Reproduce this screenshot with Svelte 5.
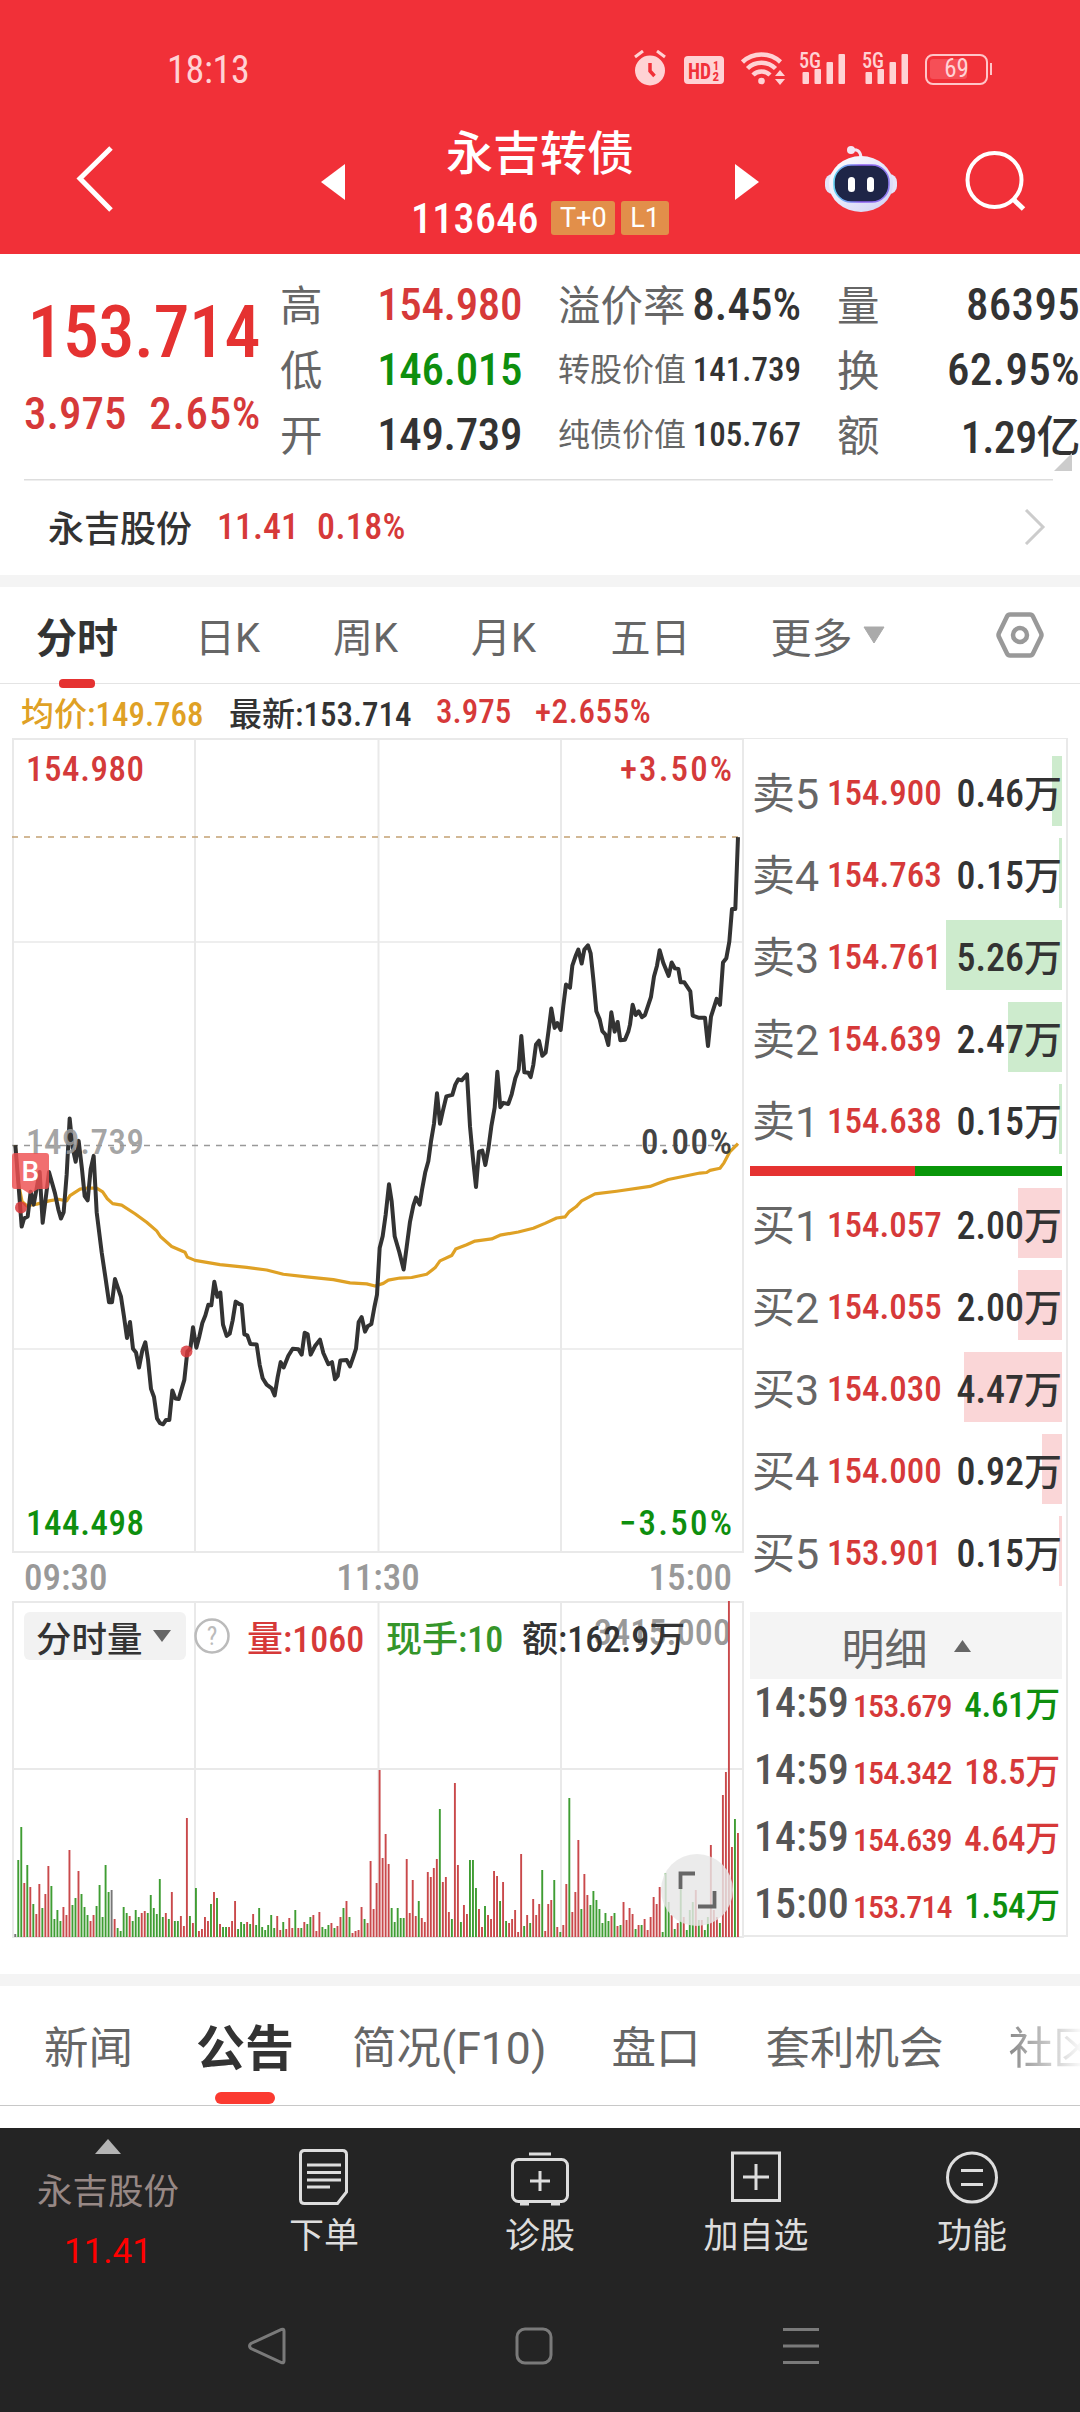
<script>
    // order book: [label, price, volume, bar width]
    const sells = [
        ["卖5", "154.900", "0.46万", 10],
        ["卖4", "154.763", "0.15万", 3],
        ["卖3", "154.761", "5.26万", 116],
        ["卖2", "154.639", "2.47万", 54],
        ["卖1", "154.638", "0.15万", 3],
    ];
    const buys = [
        ["买1", "154.057", "2.00万", 44],
        ["买2", "154.055", "2.00万", 44],
        ["买3", "154.030", "4.47万", 98],
        ["买4", "154.000", "0.92万", 20],
        ["买5", "153.901", "0.15万", 3],
    ];
    const deals = [
        ["14:59", "153.679", "4.61万", "green"],
        ["14:59", "154.342", "18.5万", "red"],
        ["14:59", "154.639", "4.64万", "red"],
        ["15:00", "153.714", "1.54万", "green"],
    ];

    const priceLine =
        "46,775 55,845 65,927 72,912 83,908 92,862 101,886 119,825 128,920 147,825 165,865 175,895 183,912 191,900 200,830 209,725 218,780 227,806 236,767 246,820 254,870 263,878 272,820 281,795 290,900 305,975 317,1025 327,1068 336,1068 345,1025 354,1042 363,1058 372,1095 381,1135 390,1105 399,1155 408,1162 417,1190 427,1158 436,1143 444,1175 453,1230 462,1245 471,1285 480,1294 489,1296 498,1288 508,1288 517,1233 526,1248 536,1249 545,1230 553,1213 562,1160 571,1155 579,1115 589,1153 598,1132 607,1107 616,1093 625,1073 634,1074 643,1030 652,1058 661,1050 669,1110 680,1131 689,1127 698,1102 707,1067 716,1071 725,1073 733,1128 742,1130 751,1146 770,1147 779,1185 788,1210 800,1222 815,1229 824,1242 833,1208 842,1180 851,1190 865,1168 878,1155 895,1156 905,1166 914,1125 923,1128 932,1166 945,1150 960,1138 970,1163 985,1184 996,1180 1005,1212 1013,1206 1021,1177 1040,1176 1050,1188 1060,1170 1068,1155 1076,1105 1085,1096 1095,1123 1103,1113 1114,1109 1123,1078 1131,1054 1139,967 1148,945 1157,905 1167,848 1175,880 1184,945 1198,975 1211,1007 1220,965 1230,918 1240,888 1248,873 1259,886 1267,855 1276,825 1285,805 1293,768 1302,735 1311,678 1320,735 1329,710 1339,684 1357,681 1366,662 1375,652 1385,654 1401,643 1410,740 1419,800 1428,853 1437,787 1447,785 1456,812 1465,782 1474,740 1484,705 1492,638 1501,704 1510,696 1525,698 1535,680 1546,650 1556,634 1564,571 1573,639 1585,640 1592,648 1600,625 1608,587 1617,580 1627,608 1637,602 1646,560 1654,520 1664,556 1672,547 1682,560 1690,515 1698,475 1710,481 1717,440 1728,420 1735,410 1745,436 1753,410 1764,402 1772,417 1780,465 1789,525 1799,540 1807,562 1816,568 1825,588 1834,527 1844,563 1853,545 1861,579 1875,578 1885,563 1890,550 1898,513 1907,532 1916,525 1926,536 1935,532 1944,515 1953,498 1962,460 1971,440 1979,411 1990,435 2006,459 2015,434 2025,445 2035,446 2042,471 2053,471 2071,488 2078,533 2095,537 2115,537 2124,590 2133,535 2150,502 2160,513 2169,434 2179,426 2188,395 2196,334 2206,334 2214,200";
    const avgLine =
        "46,775 55,845 66,880 80,888 110,885 147,879 175,876 200,879 210,869 240,857 262,855 290,855 308,862 322,875 338,884 365,887 405,903 440,919 470,935 482,946 515,964 555,975 562,984 585,990 660,998 740,1003 800,1008 850,1016 920,1021 1000,1026 1050,1032 1100,1034 1125,1038 1150,1033 1165,1027 1200,1023 1235,1022 1280,1016 1305,1004 1320,991 1355,981 1367,969 1400,961 1425,954 1475,950 1500,943 1555,937 1600,930 1635,921 1670,911 1695,909 1708,899 1728,890 1745,879 1785,866 1850,861 1950,852 2005,839 2100,827 2120,826 2130,822 2160,818 2172,808 2190,787 2214,772";

    // one entry per minute: r = up, g = down, k = flat
    const volumes =
        "k3 g77 g110 r54 g72 r50 g33 r23 r53 g29 r43 r71 g51 g18 g27 g16 r30 r22 r87 g32 g39 r66 g43 g30 g22 r16 r22 g31 g52 g20 g72 g45 k47 r18 g9 g6 g30 g24 r21 g16 g27 g20 r24 r26 g24 g42 g29 g23 g58 g20 r24 g18 r45 g16 g16 r21 r11 r119 g21 r14 g49 r6 r8 r20 r16 g33 r45 g39 r13 g10 g10 r10 r16 r36 g8 g15 g13 r15 g13 r23 g12 g29 g10 g7 g12 g22 g9 r21 r7 g15 r8 r19 r9 g27 r9 g9 r15 g13 g20 r22 r6 r25 g10 g8 g12 r14 g9 r11 r20 g29 r36 g20 r4 r6 r7 r30 g18 r14 r76 r28 r54 r167 r79 r103 r73 g29 g15 g29 g19 g19 r78 r24 r57 r21 g36 r19 r15 r65 r60 r69 r78 g128 r55 r60 r25 g18 r154 r72 g15 r32 r23 g77 g77 g49 r28 r10 g31 r22 r18 r66 r61 g36 r55 g16 r14 r18 r27 r5 r83 g11 r22 g14 r38 r22 r33 g67 r6 r33 r37 g57 r10 g5 r12 r53 g139 r25 r45 r97 g28 r63 r42 g32 g46 g37 g28 g14 g24 g16 r21 g24 r11 g12 r35 r17 r29 r23 g8 r12 g12 r18 r7 r20 r40 r33 r50 g5 g64 g35 r22 g8 r14 g50 r20 g7 g27 g35 r47 g17 r17 g7 g20 r92 r27 r20 g14 r142 r165 r336 r90 g118 r104".split(" ");
    const barColors = { r: "#c9494b", g: "#3f9d33", k: "#777" };
    const bars = volumes.map((v, i) => ({
        x: 2.3 + i * (722.7 / (volumes.length - 1)),
        h: Number(v.slice(1)),
        color: barColors[v[0]],
    }));
</script>

{#snippet signal()}
    <svg class="signal" width="47" height="34" viewBox="0 0 47 34">
        <text x="0" y="15.500" textLength="22" lengthAdjust="spacingAndGlyphs">5G</text>
        <rect x="3.500" y="20" width="6.500" height="12" rx="1" />
        <rect x="15.500" y="17" width="6.500" height="15" rx="1" />
        <rect x="27.500" y="10" width="6.500" height="22" rx="1" />
        <rect x="39.500" y="2" width="6.500" height="30" rx="1" />
    </svg>
{/snippet}

{#snippet level(row, kind)}
    <div class="level">
        <div class="depth {kind}" style="width: {row[3]}px"></div>
        <span class="lv">{row[0]}</span>
        <span class="lp">{row[1]}</span>
        <span class="lq">{row[2]}</span>
    </div>
{/snippet}

<div class="page">
    <header>
        <div class="status">
            <span class="clock">18:13</span>
            <div class="sysicons">
                <svg class="alarm" width="32" height="36" viewBox="0 0 32 36">
                    <circle cx="16" cy="20.500" r="15" fill="#ffd2d4" />
                    <path d="M1 7l8-6M31 7l-8-6" stroke="#ffd2d4" stroke-width="3" />
                    <path d="M16 13v8l4.500 5" fill="none" stroke="#f13038" stroke-width="3.500" />
                </svg>
                <svg class="hd" width="40" height="29" viewBox="0 0 40 29">
                    <rect width="40" height="28" rx="4" fill="#ffd2d4" />
                    <text x="4" y="22.500" font-size="22" textLength="23" lengthAdjust="spacingAndGlyphs">HD</text>
                    <text x="29" y="13.500" font-size="12">1</text>
                    <text x="28.500" y="25" font-size="13">2</text>
                </svg>
                <svg class="wifi" width="45" height="36" viewBox="0 0 45 36">
                    <path d="M1.500 12a28 28 0 0 1 38 0M6.500 18.500a20 20 0 0 1 28 0M12 25a12 12 0 0 1 17 0" fill="none" stroke="#ffd2d4" stroke-width="4.500" />
                    <circle cx="20.500" cy="31" r="3.300" fill="#ffd2d4" />
                    <path d="M34 26l5-6 5 6zM34 29l5 6 5-6z" fill="#ffd2d4" />
                </svg>
                {@render signal()}
                {@render signal()}
                <div class="battery"><span>69</span></div>
            </div>
        </div>
        <div class="titlebar">
            <svg class="back" width="40" height="68" viewBox="0 0 40 68">
                <path d="M36 3L5 33.500 36 65" fill="none" stroke="#fff" stroke-width="5" />
            </svg>
            <svg class="prev" width="24" height="36" viewBox="0 0 24 36"><path d="M24 0v36L0 18z" fill="#fff" /></svg>
            <div class="names">
                <div class="name">永吉转债</div>
                <div class="code">
                    <span class="num">113646</span>
                    <i class="t0">T+0</i>
                    <i class="l1">L1</i>
                </div>
            </div>
            <svg class="next" width="24" height="36" viewBox="0 0 24 36"><path d="M0 0v36L24 18z" fill="#fff" /></svg>
            <svg class="robot" width="74" height="68" viewBox="0 0 74 68">
                <defs>
                    <linearGradient id="shell" x1="0" y1="0" x2="1" y2="1">
                        <stop offset="0" stop-color="#fff" />
                        <stop offset="1" stop-color="#cfd0f4" />
                    </linearGradient>
                    <linearGradient id="rim" x1="0" y1="0" x2="1" y2="0">
                        <stop offset="0" stop-color="#63d2f2" />
                        <stop offset=".5" stop-color="#8b5cf0" />
                        <stop offset="1" stop-color="#8e7cf0" />
                    </linearGradient>
                </defs>
                <path d="M27 5q9-2 10 7" fill="none" stroke="#f3e6f4" stroke-width="3" />
                <circle cx="27" cy="5" r="4" fill="#f3e6f4" />
                <rect x="1" y="29" width="72" height="20" rx="8" fill="#e6e3f8" />
                <ellipse cx="37" cy="39" rx="32" ry="28" fill="url(#shell)" />
                <rect x="10" y="20" width="55" height="37" rx="17" fill="#1e2547" stroke="url(#rim)" stroke-width="1.600" />
                <rect x="24" y="32" width="7" height="15" rx="3.500" fill="#fff" />
                <rect x="43" y="32" width="7" height="15" rx="3.500" fill="#fff" />
            </svg>
            <svg class="search" width="62" height="62" viewBox="0 0 62 62">
                <circle cx="29.500" cy="30" r="27" fill="none" stroke="#fff" stroke-width="4" />
                <path d="M48 49l10.500 10" stroke="#fff" stroke-width="5" />
            </svg>
        </div>
    </header>

    <section class="quote">
        <div class="last">
            <div class="price">153.714</div>
            <div class="change"><span>3.975</span><span>2.65%</span></div>
        </div>
        <div class="cell"><span class="k">高</span><b class="red">154.980</b></div>
        <div class="cell mid"><span class="k">溢价率</span><b>8.45%</b></div>
        <div class="cell end"><span class="k">量</span><b>86395</b></div>
        <div class="cell"><span class="k">低</span><b class="green">146.015</b></div>
        <div class="cell mid small"><span class="k">转股价值</span><b>141.739</b></div>
        <div class="cell end"><span class="k">换</span><b>62.95%</b></div>
        <div class="cell"><span class="k">开</span><b>149.739</b></div>
        <div class="cell mid small"><span class="k">纯债价值</span><b>105.767</b></div>
        <div class="cell end"><span class="k">额</span><b class="yi">1.29亿</b></div>
        <svg class="corner" width="18" height="18" viewBox="0 0 18 18"><path d="M18 0v18H0z" fill="#ccc" /></svg>
    </section>

    <section class="stock">
        <span class="sname">永吉股份</span>
        <span class="red s1">11.41</span>
        <span class="red s2">0.18%</span>
        <svg width="24" height="36" viewBox="0 0 24 36"><path d="M3 1l17 17L3 35" fill="none" stroke="#ccc" stroke-width="3" /></svg>
    </section>

    <nav class="periods">
        <span class="on">分时</span>
        <span>日K</span>
        <span>周K</span>
        <span>月K</span>
        <span>五日</span>
        <span>更多</span>
        <svg class="more" width="22" height="18" viewBox="0 0 22 18"><path d="M1 1h20L11 17z" fill="#aaa" stroke="#aaa" stroke-linejoin="round" /></svg>
        <svg class="gear" width="48" height="46" viewBox="0 0 48 46">
            <path d="M14 2.500h20q2 0 3 2l8 16.500q1 2 0 4l-8 16.500q-1 2-3 2H14q-2 0-3-2L3 25q-1-2 0-4l8-16.500q1-2 3-2z" fill="none" stroke="#999" stroke-width="4.500" />
            <circle cx="24" cy="23" r="7" fill="none" stroke="#999" stroke-width="4.500" />
        </svg>
    </nav>

    <div class="legend">
        <span class="avg">均价:149.768</span>
        <span class="new">最新:153.714</span>
        <span class="red chg">3.975</span>
        <span class="red pct">+2.655%</span>
    </div>

    <div class="board">
        <div class="charts">
            <svg class="pricechart" width="732" height="818" viewBox="0 0 732 818">
                <g fill="none" stroke="#e9e9e9" stroke-width="2">
                    <path d="M1 4h730v813H1zM183 4v813M366.500 4v813M549 4v813" />
                    <path d="M1 207h730M1 614h730" stroke-width="1.500" />
                </g>
                <path d="M0 102h726" stroke="#c3a173" stroke-width="1.700" stroke-dasharray="6 6" />
                <path d="M0 410.500h726" stroke="#999" stroke-width="1.700" stroke-dasharray="6 6" />
                <g class="axis">
                    <text x="14" y="45.500" fill="#d43a3a" textLength="118">154.980</text>
                    <text x="608" y="45.500" fill="#d43a3a" textLength="112">+3.50%</text>
                    <text x="14" y="800" fill="#0e8f0e" textLength="118">144.498</text>
                    <text x="607" y="800" fill="#0e8f0e" textLength="113">−3.50%</text>
                </g>
                <g transform="translate(-12 -5) scale(.33333 .53571)" fill="none" stroke-linejoin="round">
                    <polyline points={avgLine} stroke="#dfa125" stroke-width="3.200" vector-effect="non-scaling-stroke" />
                    <polyline points={priceLine} stroke="#333" stroke-width="4" vector-effect="non-scaling-stroke" />
                </g>
                <g class="axis">
                    <text x="14" y="419" fill="#999" fill-opacity=".9" textLength="118">149.739</text>
                    <text x="629" y="419" fill="#444" textLength="91">0.00%</text>
                </g>
                <circle cx="9" cy="472.500" r="6" fill="#d8383c" fill-opacity=".85" />
                <circle cx="174.500" cy="616.500" r="6" fill="#d8383c" fill-opacity=".85" />
                <path d="M3 418h31q3 0 3 3v30q0 3-3 3H26l-8 5-8-5H3q-3 0-3-3v-30q0-3 3-3z" fill="#ee4f50" fill-opacity=".82" />
                <text class="mark" x="9.500" y="446">B</text>
            </svg>
            <div class="times"><span>09:30</span><span>11:30</span><span>15:00</span></div>
            <div class="volume">
                <svg width="732" height="337" viewBox="0 0 732 337">
                    <g fill="none" stroke="#e9e9e9" stroke-width="2">
                        <path d="M1 1h730v335H1zM183 1v335M366.500 1v335M549 1v335M1 168h730" />
                    </g>
                    <text class="volmax" x="582" y="43.500" textLength="137">3415.000</text>
                    {#each bars as b}
                        <rect x={b.x} y={336 - b.h} width="1.900" height={b.h} fill={b.color} />
                    {/each}
                </svg>
                <div class="volbar">
                    <span class="pick">分时量<svg width="18" height="12" viewBox="0 0 18 12"><path d="M0 0h18L9 12z" fill="#666" /></svg></span>
                    <svg width="36" height="36" viewBox="0 0 36 36">
                        <circle cx="18" cy="18" r="16.500" fill="none" stroke="#bbb" stroke-width="2.500" />
                        <text class="ask" x="18" y="26.500">?</text>
                    </svg>
                    <span class="red v1">量:1060</span>
                    <span class="v2">现手:10</span>
                    <span class="v3">额:162.9万</span>
                </div>
                <svg class="expand" width="72" height="72" viewBox="0 0 72 72">
                    <circle cx="36" cy="36" r="36" fill="#e6e6e6" fill-opacity=".82" />
                    <path d="M19.500 35V19.500H34M53.500 37v15.500H37" fill="none" stroke="#666" stroke-width="3.800" />
                </svg>
            </div>
        </div>

        <aside>
            {#each sells as row}
                {@render level(row, "sell")}
            {/each}
            <div class="ratio"></div>
            {#each buys as row}
                {@render level(row, "buy")}
            {/each}
            <div class="dealhead">
                明细
                <svg width="17" height="12" viewBox="0 0 17 12"><path d="M8.500 0L17 12H0z" fill="#666" /></svg>
            </div>
            {#each deals as [time, price, vol, color]}
                <div class="deal">
                    <span class="dt">{time}</span>
                    <span class="dp">{price}</span>
                    <span class="dv {color}">{vol}</span>
                </div>
            {/each}
        </aside>
    </div>

    <nav class="infotabs">
        <span>新闻</span>
        <span class="on">公告</span>
        <span>简况(F10)</span>
        <span>盘口</span>
        <span>套利机会</span>
        <span class="fade">社区</span>
    </nav>

    <footer>
        <div class="tools">
            <div class="tool mini">
                <svg width="26" height="15" viewBox="0 0 26 15"><path d="M13 0l13 15H0z" fill="#b4b4b4" /></svg>
                <span class="mname">永吉股份</span>
                <span class="mprice">11.41</span>
            </div>
            <div class="tool">
                <svg width="60" height="60" viewBox="0 0 60 60">
                    <path d="M10.500 3.500h38q4 0 4 4V45l-9 11.500h-33q-4 0-4-4v-45q0-4 4-4z" />
                    <path d="M13 18h34M13 25.500h34M13 33h34M13 40h23" />
                </svg>
                <span>下单</span>
            </div>
            <div class="tool">
                <svg width="60" height="60" viewBox="0 0 60 60">
                    <rect x="2.500" y="12.500" width="55" height="42" rx="6" />
                    <path d="M19 7h22M30 24v20M20 34h20" />
                    <path d="M10 56.500h9M41 56.500h9" stroke-width="4" />
                </svg>
                <span>诊股</span>
            </div>
            <div class="tool">
                <svg width="60" height="60" viewBox="0 0 60 60">
                    <rect x="6.500" y="6" width="47" height="47.500" />
                    <path d="M30 17v26M17 30h26" />
                </svg>
                <span>加自选</span>
            </div>
            <div class="tool">
                <svg width="60" height="60" viewBox="0 0 60 60">
                    <circle cx="30" cy="30.500" r="24.500" />
                    <path d="M19 23.500h22M19 37.500h22" />
                </svg>
                <span>功能</span>
            </div>
        </div>
        <div class="softkeys">
            <svg width="38" height="38" viewBox="0 0 38 38"><path d="M36 4v30q0 2.500-2.500 1.500L3 21.500q-3-2.500 0-5L33.500 2.500Q36 1.500 36 4z" /></svg>
            <svg width="38" height="38" viewBox="0 0 38 38"><rect x="2" y="2" width="34" height="34" rx="8" /></svg>
            <svg width="38" height="38" viewBox="0 0 38 38"><path d="M1 2.500h36M1 19h36M1 35.500h36" /></svg>
        </div>
    </footer>
</div>

<style>
    :global(body) {
        margin: 0;
        background: #fff;
    }
    .page {
        width: 1080px;
        height: 2412px;
        overflow: hidden;
        display: flex;
        flex-direction: column;
        font-family: Roboto, "Noto Sans CJK SC", sans-serif;
        font-stretch: 87%;
        font-weight: 500;
        color: #333;
        white-space: nowrap;
        background: #fff;
    }
    svg {
        display: block;
        flex: none;
    }
    .red {
        color: #d63939;
    }
    .green {
        color: #0e8f0e;
    }

    header {
        height: 254px;
        background: #f13038;
        color: #fff;
        flex: none;
    }
    .status {
        height: 120px;
        display: flex;
        justify-content: space-between;
        padding: 50px 88px 0 167px;
        box-sizing: border-box;
        color: #ffd2d4;
    }
    .clock {
        font-size: 38px;
        line-height: 40px;
        font-weight: 400;
        letter-spacing: -0.3px;
    }
    .sysicons {
        display: flex;
        align-items: flex-start;
    }
    .hd {
        margin: 6px 0 0 18px;
    }
    .hd text {
        fill: #f13038;
        font-weight: 700;
    }
    .wifi {
        margin-left: 17px;
    }
    .signal {
        margin: 2px 0 0 13px;
        fill: #ffd2d4;
        overflow: visible;
    }
    .signal + .signal {
        margin-left: 16px;
    }
    .signal text {
        font-size: 22px;
        font-weight: 500;
    }
    .battery {
        position: relative;
        width: 63px;
        height: 31px;
        margin: 4px 4px 0 16px;
        padding: 3px;
        box-sizing: border-box;
        border: 2.5px solid #ffc5c8;
        border-radius: 8px;
        font-size: 25px;
        line-height: 20px;
        font-weight: 400;
        text-align: center;
    }
    .battery::before {
        content: "";
        position: absolute;
        left: 3px;
        top: 3px;
        width: 37px;
        height: 20px;
        background: #f64f57;
        border-radius: 3px;
    }
    .battery::after {
        content: "";
        position: absolute;
        right: -6px;
        top: 7px;
        width: 2px;
        height: 12px;
        background: #ffc5c8;
    }
    .battery span {
        position: relative;
    }
    .titlebar {
        display: flex;
        align-items: flex-start;
    }
    .back {
        margin: 25px 0 0 75px;
    }
    .prev {
        margin: 44px 0 0 206px;
    }
    .names {
        width: 390px;
        display: flex;
        flex-direction: column;
        align-items: center;
    }
    .name {
        font-size: 47px;
        line-height: 60px;
        margin-top: 4px;
        font-weight: 500;
    }
    .code {
        display: flex;
        align-items: center;
        width: 258px;
        height: 36px;
        margin-top: 16px;
        font-size: 42px;
    }
    .code .num {
        width: 141px;
        letter-spacing: 0.3px;
    }
    .code i {
        font-style: normal;
        font-weight: 400;
        font-size: 27px;
        font-stretch: 100%;
        line-height: 34px;
        height: 34px;
        text-align: center;
        background: #e28f4a;
        border-radius: 3px;
    }
    .t0 {
        width: 64px;
        margin-right: 6px;
    }
    .l1 {
        width: 48px;
    }
    .next {
        margin-top: 44px;
    }
    .robot {
        margin: 25px 0 0 65px;
    }
    .search {
        margin: 30px 0 0 67px;
    }

    .quote {
        position: relative;
        display: grid;
        grid-template-columns: 280px 278px 279px 243px;
        grid-template-rows: repeat(3, 65px);
        padding-top: 18px;
        height: 225px;
        box-sizing: border-box;
        flex: none;
    }
    .last {
        grid-row: 1 / 4;
        width: 233px;
        padding: 23px 0 0 27px;
        text-align: right;
        color: #e53231;
    }
    .price {
        font-size: 72px;
        line-height: 76px;
        letter-spacing: -0.5px;
    }
    .change {
        display: flex;
        justify-content: space-between;
        margin-top: 18px;
        margin-left: -3px;
        margin-right: -1px;
        font-size: 45px;
        line-height: 50px;
        color: #d63939;
    }
    .change span + span {
        letter-spacing: 0.6px;
    }
    .cell {
        display: flex;
        align-items: center;
        justify-content: space-between;
        padding-right: 36px;
        height: 65px;
    }
    .mid {
        padding-right: 36px;
    }
    .end {
        padding-right: 0;
    }
    .k {
        font-size: 42.5px;
        font-weight: 400;
        color: #666;
        margin-top: -5px;
    }
    .cell b {
        font-size: 45px;
        font-weight: 500;
        letter-spacing: -0.4px;
    }
    .mid b {
        letter-spacing: 0;
    }
    .end b {
        letter-spacing: 0.3px;
    }
    .end .yi {
        font-size: 44px;
        letter-spacing: -0.6px;
        margin-top: -2px;
    }
    .small .k {
        font-size: 32px;
    }
    .small b {
        font-size: 33px;
    }
    .corner {
        position: absolute;
        right: 8px;
        bottom: 8px;
    }

    .stock {
        display: flex;
        align-items: center;
        height: 96px;
        padding: 0 33px 0 48px;
        border-bottom: 12px solid #f4f4f4;
        font-size: 36px;
        flex: none;
        background: linear-gradient(#ddd, #ddd) 24px 0 / 1029px 1.5px no-repeat;
    }
    .sname {
        width: 169px;
        font-size: 36px;
        margin-top: -3px;
    }
    .s1 {
        width: 100px;
    }
    .s2 {
        letter-spacing: 0.4px;
    }
    .stock svg {
        margin-left: auto;
    }

    .periods {
        height: 96px;
        display: flex;
        align-items: center;
        border-bottom: 1px solid #e4e4e4;
        font-size: 40px;
        font-weight: 400;
        font-stretch: 100%;
        color: #666;
        padding-left: 36px;
        flex: none;
    }
    .periods span {
        width: 139.5px;
        margin-top: -1px;
    }
    .periods .on {
        position: relative;
        width: 159px;
        font-size: 41px;
        font-weight: 700;
        color: #333;
    }
    .periods .on::after {
        content: "";
        position: absolute;
        left: 23px;
        bottom: -23px;
        width: 36px;
        height: 9px;
        border-radius: 4px;
        background: #e53231;
    }
    .periods span:nth-child(2),
    .periods span:nth-child(3) {
        width: 138px;
    }
    .periods span:nth-child(5) {
        width: 160px;
    }
    .periods span:nth-child(6) {
        width: 92px;
        font-size: 41px;
    }
    .gear {
        margin-left: 111px;
    }

    .legend {
        display: flex;
        align-items: center;
        height: 51px;
        padding: 4px 0 0 21px;
        box-sizing: border-box;
        font-size: 33px;
        flex: none;
    }
    .avg {
        width: 208px;
        color: #dfa125;
    }
    .new {
        width: 207px;
    }
    .chg {
        width: 99px;
    }
    .pct {
        letter-spacing: 0.6px;
    }

    .board {
        display: flex;
        height: 1203px;
        padding-left: 12px;
        flex: none;
    }
    .charts {
        width: 732px;
    }
    .axis text {
        font-size: 35px;
    }
    .mark {
        font-size: 28px;
        font-stretch: 100%;
        fill: #fff;
    }
    .times {
        display: flex;
        justify-content: space-between;
        align-items: center;
        height: 48px;
        padding: 0 12px;
        font-size: 37px;
        color: #999;
    }
    .volume {
        position: relative;
    }
    .volmax {
        font-size: 36px;
        fill: #999;
    }
    .volbar {
        position: absolute;
        left: 12px;
        top: 11px;
        display: flex;
        align-items: center;
        height: 48px;
        font-size: 36px;
    }
    .pick {
        display: flex;
        align-items: center;
        justify-content: space-between;
        width: 162px;
        height: 48px;
        margin-right: 8px;
        padding: 0 15px 0 12px;
        box-sizing: border-box;
        background: #f2f2f2;
        border-radius: 6px;
        font-size: 35.5px;
    }
    .ask {
        font-size: 25px;
        font-weight: 400;
        fill: #bbb;
        text-anchor: middle;
    }
    .v1 {
        width: 139px;
        margin-left: 17px;
    }
    .v2 {
        width: 136px;
        color: #35952a;
    }
    .expand {
        position: absolute;
        right: 11px;
        top: 253px;
    }

    aside {
        width: 324px;
        height: 1199px;
        box-sizing: border-box;
        padding: 17px 4px 0 6px;
        border-top: 1px solid #e9e9e9;
        border-right: 2px solid #e9e9e9;
        border-bottom: 2px solid #e9e9e9;
        margin-top: 3px;
    }
    .level {
        position: relative;
        display: flex;
        align-items: center;
        height: 70px;
        margin-bottom: 12px;
    }
    .depth {
        position: absolute;
        right: 0;
        top: 0;
        height: 70px;
    }
    .sell {
        background: #cdebcd;
    }
    .buy {
        background: #fad6d7;
    }
    .level span {
        position: relative;
    }
    .lv {
        width: 75px;
        padding-left: 2px;
        margin-top: -3px;
        font-size: 43px;
        font-weight: 400;
        font-stretch: 100%;
        color: #666;
    }
    .lp {
        font-size: 35px;
        color: #d63939;
        margin-top: 4px;
    }
    .lq {
        margin: -2px 0 0 auto;
        font-size: 38px;
    }
    .ratio {
        height: 10px;
        margin: 2px 0 12px;
        background: linear-gradient(90deg, #e53231 165px, #099609 165px);
    }
    .dealhead {
        display: flex;
        align-items: center;
        justify-content: center;
        gap: 26px;
        height: 67px;
        margin-top: 26px;
        background: #f4f4f4;
        font-size: 43px;
        font-weight: 400;
        color: #666;
    }
    .deal {
        display: flex;
        align-items: baseline;
        height: 67px;
        line-height: 48px;
        padding: 0 2px 0 4px;
    }
    .dt {
        width: 99px;
        font-size: 42px;
        color: #555;
    }
    .dp {
        font-size: 32px;
        color: #d63939;
        letter-spacing: -0.9px;
    }
    .dv {
        margin-left: auto;
        font-size: 35px;
        letter-spacing: -0.3px;
    }

    .infotabs {
        position: relative;
        display: flex;
        align-items: center;
        height: 119px;
        padding-left: 44px;
        margin-top: 36px;
        border-top: 12px solid #f4f4f4;
        border-bottom: 1px solid #c8c8c8;
        font-size: 44.5px;
        font-weight: 400;
        font-stretch: 100%;
        color: #666;
        flex: none;
    }
    .infotabs span {
        margin: -2px 65px 0 0;
    }
    .infotabs .on {
        position: relative;
        margin: -2px 58px 0 -2px;
        font-size: 49px;
        font-weight: 700;
        color: #333;
    }
    .infotabs .on::after {
        content: "";
        position: absolute;
        left: 19px;
        bottom: -24px;
        width: 60px;
        height: 12px;
        border-radius: 6px;
        background: #fb3a31;
    }
    .infotabs .fade {
        margin-right: 0;
        color: transparent;
        background: linear-gradient(90deg, #888, #fff 76px);
        background-clip: text;
    }

    footer {
        margin-top: 22px;
        height: 285px;
        background: #242424;
        color: #ddd;
        flex: none;
    }
    .tools {
        display: flex;
        height: 165px;
    }
    .tool {
        width: 216px;
        display: flex;
        flex-direction: column;
        align-items: center;
        padding-top: 19px;
        font-size: 35px;
        line-height: 50px;
        font-weight: 400;
    }
    .tool span {
        margin-top: 5px;
    }
    .tool svg {
        fill: none;
        stroke: #ddd;
        stroke-width: 3;
    }
    .mini {
        padding-top: 11px;
    }
    .mini svg {
        stroke: none;
    }
    .tool .mname {
        margin-top: 13px;
        font-size: 35.5px;
        color: #978885;
    }
    .tool .mprice {
        margin-top: 10px;
        font-stretch: 100%;
        color: #f00;
    }
    .softkeys {
        display: flex;
        padding: 34px 0 0 248px;
        gap: 229px;
    }
    .softkeys svg {
        fill: none;
        stroke: #7a7a7a;
        stroke-width: 3;
    }
</style>
